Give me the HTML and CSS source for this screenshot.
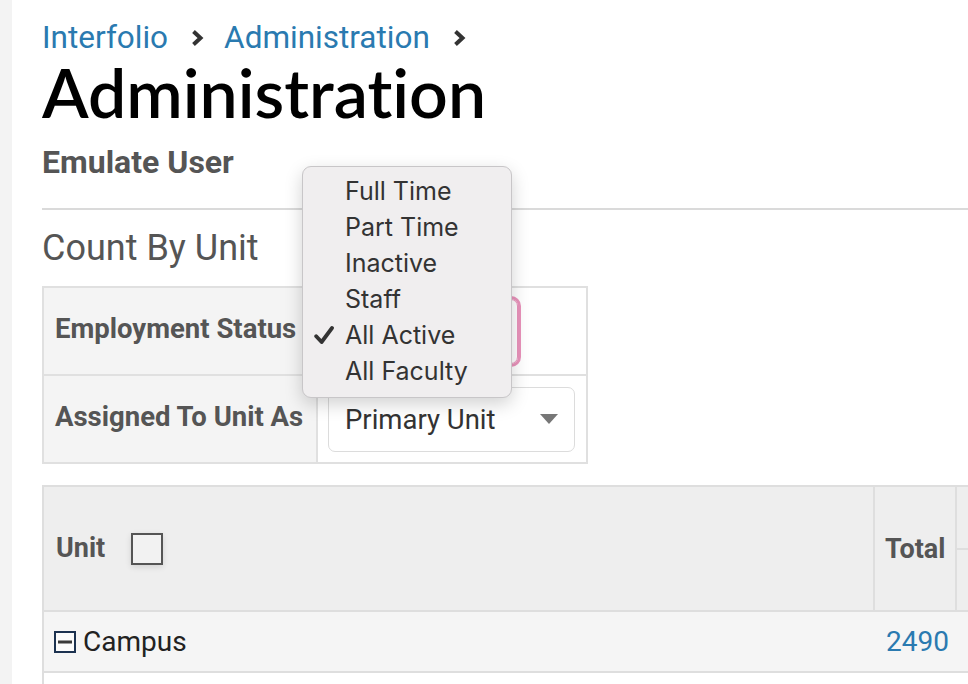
FILE: index.html
```html
<!DOCTYPE html>
<html lang="en">

<head>
    <meta charset="UTF-8">
    <title>Administration</title>
    <link rel="stylesheet" href="styles.css">
</head>

<body>
    <div class="side-strip"></div>
    <div class="page">
        <div class="breadcrumb">
            <a href="#">Interfolio</a>
            <svg class="crumb-sep" viewBox="0 0 13 18" width="13" height="18">
                <polyline points="2.5,2.5 9.5,9 2.5,15.5" fill="none" stroke="#333" stroke-width="4" />
            </svg>
            <a href="#">Administration</a>
            <svg class="crumb-sep" viewBox="0 0 13 18" width="13" height="18">
                <polyline points="2.5,2.5 9.5,9 2.5,15.5" fill="none" stroke="#333" stroke-width="4" />
            </svg>
        </div>
        <h1 class="page-title">Administration</h1>
        <div class="sub-title">Emulate User</div>
        <hr class="divider">
        <h2 class="section-title">Count By Unit</h2>

        <table class="filter-table">
            <tr>
                <th>Employment Status</th>
                <td>
                    <div class="select select-focus">All Active <span class="caret"></span></div>
                </td>
            </tr>
            <tr>
                <th>Assigned To Unit As</th>
                <td>
                    <div class="select">Primary Unit <span class="caret"></span></div>
                </td>
            </tr>
        </table>

        <table class="count-table">
            <colgroup>
                <col class="unit-col">
                <col class="total-col">
                <col>
            </colgroup>
            <thead>
                <tr>
                    <th rowspan="2">Unit <span class="checkbox"></span></th>
                    <th class="total-head" rowspan="2">Total</th>
                    <th></th>
                </tr>
                <tr>
                    <th></th>
                </tr>
            </thead>
            <tbody>
                <tr class="unit-row">
                    <td>
                        <svg class="toggle" viewBox="0 0 22 22" width="22" height="22">
                            <rect x="1" y="1" width="20" height="20" fill="#fbfbfb" stroke="#1c3250" stroke-width="2" />
                            <rect x="4" y="9.5" width="14" height="3" fill="#3a3a3a" />
                        </svg>Campus
                    </td>
                    <td class="total-cell"><a href="#">2490</a></td>
                    <td></td>
                </tr>
                <tr class="empty-row">
                    <td></td>
                    <td></td>
                    <td></td>
                </tr>
            </tbody>
        </table>

        <div class="status-menu">
            <ul>
                <li>Full Time</li>
                <li>Part Time</li>
                <li>Inactive</li>
                <li>Staff</li>
                <li class="checked">
                    <svg class="check" viewBox="0 0 20 18" width="20" height="18">
                        <path d="M2.2 10.2 L7.6 16 L18 2" fill="none" stroke="#333" stroke-width="3.8" stroke-linecap="round" stroke-linejoin="round" />
                    </svg>All Active
                </li>
                <li>All Faculty</li>
            </ul>
        </div>
    </div>
</body>

</html>
```

FILE: styles.css
```css
body {
    margin: 0;
    display: flex;
    height: 684px;
    overflow: hidden;
    background-color: #f3f3f3;
    font-family: Roboto, "Liberation Sans", sans-serif;
}

.side-strip {
    width: 12px;
    flex-shrink: 0;
}

.page {
    position: relative;
    flex: 1;
    min-width: 0;
    background-color: #fff;
    padding: 20px 0 0 30px;
}

a {
    color: #2a7ab0;
    text-decoration: none;
}

.breadcrumb {
    display: flex;
    align-items: center;
    height: 36px;
    font-size: 31.5px;
    line-height: 36px;
}

.crumb-sep {
    margin: 0 20px 0 23px;
}

.page-title {
    margin: 0;
    font-family: Lato, "Open Sans", sans-serif;
    font-variant-ligatures: none;
    font-size: 68px;
    line-height: 72px;
    font-weight: 600;
    color: #000;
}

.sub-title {
    margin-top: 18px;
    font-size: 32px;
    line-height: 32px;
    font-weight: 700;
    color: #555;
}

.divider {
    border: 0;
    height: 2px;
    margin: 30px 0 0 0;
    background-color: #dadada;
}

.section-title {
    margin: 18px 0 0 0;
    font-size: 36px;
    line-height: 40px;
    font-weight: 400;
    color: #555;
}

.filter-table {
    margin-top: 18px;
    border-collapse: collapse;
    border: 2px solid #e0e0e0;
}

.filter-table th,
.filter-table td {
    border: 2px solid #e0e0e0;
    height: 86px;
}

.filter-table th {
    width: 250px;
    height: 80px;
    padding: 0 11px 6px 11px;
    white-space: nowrap;
    text-align: left;
    font-size: 27.5px;
    font-weight: 700;
    color: #555;
    background-color: #f4f4f4;
}

.filter-table td {
    padding: 0 11px 0 10px;
    background-color: #fff;
}

.select {
    display: flex;
    align-items: center;
    justify-content: space-between;
    box-sizing: border-box;
    width: 247px;
    height: 65px;
    padding: 0 16px;
    border: 1px solid #dcdcdc;
    border-radius: 7px;
    font-size: 27.5px;
    color: #333;
}

.select-focus {
    width: 190px;
    border-color: #e993bb;
    box-shadow: 0 0 0 3px #e993bb;
}

.caret {
    border-left: 9.5px solid transparent;
    border-right: 9.5px solid transparent;
    border-top: 10px solid #777;
}

.count-table {
    width: 1100px;
    margin-top: 21px;
    table-layout: fixed;
    border-collapse: collapse;
    border: 2px solid #dedede;
}

.unit-col {
    width: 831px;
}

.total-col {
    width: 82px;
}

.count-table th,
.count-table td {
    border: 2px solid #dedede;
    padding: 0 12px;
}

.count-table th {
    height: 60.5px;
    background-color: #eee;
    text-align: left;
    font-size: 27px;
    font-weight: 700;
    color: #555;
}

.count-table .total-head {
    padding: 0 8px 0 10px;
}

.checkbox {
    display: inline-block;
    width: 28px;
    height: 28px;
    margin-left: 19px;
    vertical-align: middle;
    border: 2px solid #555;
    background-color: #f2f2f2;
    box-shadow: 0 2px 6px rgba(0, 0, 0, 0.12);
}

.unit-row td {
    height: 59px;
    background-color: #f5f5f5;
    font-size: 28px;
    color: #222;
    border-left: 0;
    border-right: 0;
}

.unit-row td:first-child {
    padding-left: 10px;
    border-left: 2px solid #dedede;
}

.toggle {
    margin-right: 7px;
    vertical-align: -2px;
}

.count-table .total-cell {
    text-align: right;
    padding-right: 9px;
}

.empty-row td {
    height: 58px;
    background-color: #fff;
    border: 0;
}

.empty-row td:first-child {
    border-left: 2px solid #dedede;
}

.status-menu {
    position: absolute;
    left: 290px;
    top: 166px;
    width: 208px;
    height: 230px;
    background-color: #f0eeef;
    border: 1px solid #c8c6c8;
    border-radius: 9px;
    box-shadow: 0 6px 18px rgba(0, 0, 0, 0.18);
}

.status-menu ul {
    list-style: none;
    margin: 0;
    padding: 6px 0 0 0;
}

.status-menu li {
    position: relative;
    padding-left: 42px;
    line-height: 36px;
    font-family: Inter, Roboto, sans-serif;
    font-size: 25px;
    color: #333;
}

.check {
    position: absolute;
    left: 11px;
    top: 9px;
}
```
